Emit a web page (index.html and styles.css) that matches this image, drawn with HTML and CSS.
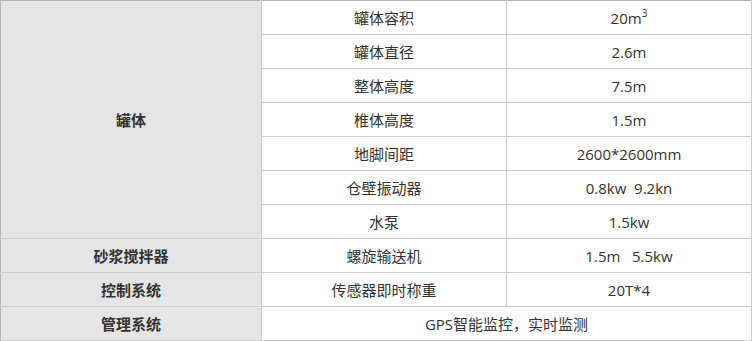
FILE: index.html
```html
<!DOCTYPE html>
<html lang="zh-CN">
<head>
<meta charset="utf-8">
<link rel="stylesheet" href="styles.css">
</head>
<body>
<table class="spec">
  <colgroup>
    <col class="c1">
    <col class="c2">
    <col class="c3">
  </colgroup>
  <tbody>
    <tr>
      <th rowspan="7">罐体</th>
      <td>罐体容积</td>
      <td>20m<sup>3</sup></td>
    </tr>
    <tr><td>罐体直径</td><td>2.6m</td></tr>
    <tr><td>整体高度</td><td>7.5m</td></tr>
    <tr><td>椎体高度</td><td>1.5m</td></tr>
    <tr><td>地脚间距</td><td>2600*2600mm</td></tr>
    <tr><td>仓壁振动器</td><td>0.8kw&nbsp;&nbsp;9.2kn</td></tr>
    <tr><td>水泵</td><td>1.5kw</td></tr>
    <tr><th>砂浆搅拌器</th><td>螺旋输送机</td><td>1.5m&nbsp;&nbsp;&nbsp;5.5kw</td></tr>
    <tr><th>控制系统</th><td>传感器即时称重</td><td>20T*4</td></tr>
    <tr><th>管理系统</th><td colspan="2">GPS智能监控，实时监测</td></tr>
  </tbody>
</table>
</body>
</html>
```

FILE: styles.css
```css
html, body {
  margin: 0;
  padding: 0;
  background: #ffffff;
}

.spec {
  border-collapse: collapse;
  table-layout: fixed;
  width: 751px;
  font-family: "Open Sans", "Noto Sans CJK SC", sans-serif;
  font-size: 15px;
  color: #333333;
  border-top: 1px solid #b3b3b3;
  border-left: 1px solid #b3b3b3;
}

.c1 { width: 261px; }
.c2 { width: 245px; }
.c3 { width: 245px; }

.spec tr {
  height: 34px;
}

.spec th,
.spec td {
  height: 32px;
  padding: 1px 0 0;
  border: 1px solid #cccccc;
  text-align: center;
  vertical-align: middle;
  line-height: 18px;
}

.spec th {
  background: #e5e5e5;
  font-weight: bold;
  border-left-color: #b3b3b3;
}

.spec tr:first-child th,
.spec tr:first-child td {
  border-top-color: #b3b3b3;
}

.spec sup {
  font-size: 10px;
  line-height: 0;
  vertical-align: 7px;
}
```
